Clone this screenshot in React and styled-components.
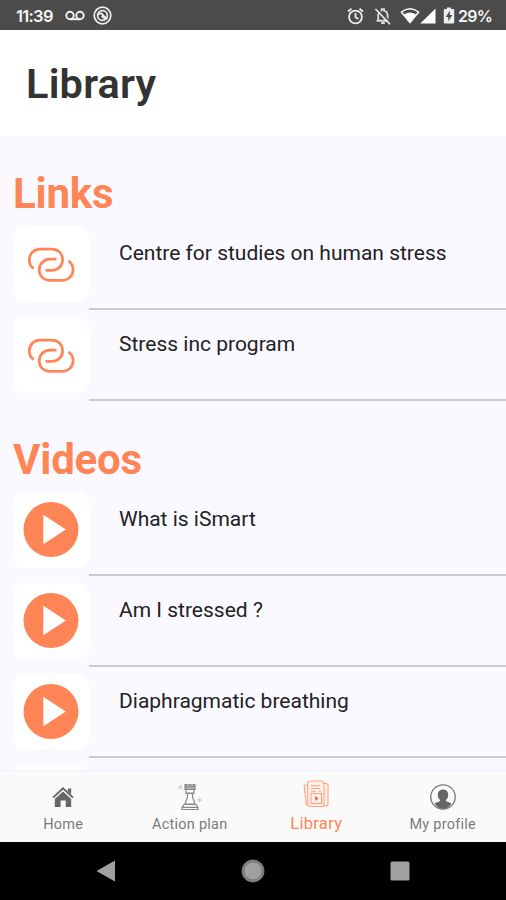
import React from 'react'
import styled, { createGlobalStyle } from 'styled-components'

const GlobalStyle = createGlobalStyle`
* {
  box-sizing: border-box;
}
body {
  margin: 0;
  font-family: Roboto, sans-serif;
  background: #faf9ff;
}
`

const Screen = styled.div`
display: flex;
flex-direction: column;
width: 506px;
height: 900px;
overflow: hidden;
`
const StatusBar = styled.div`
display: flex;
flex: none;
align-items: center;
justify-content: space-between;
height: 30px;
padding: 1px 14px 0 16px;
background: #4b4b4b;
color: #f4f4f4;
`
const StatusGroup = styled.div`
display: flex;
align-items: center;
`
const StatusText = styled.span`
width: ${props => props.$width}px;
margin-left: ${props => props.$gap || 0}px;
font-family: Inter, sans-serif;
font-size: ${props => props.$size}px;
line-height: 20px;
font-weight: 600;
letter-spacing: ${props => props.$spacing}px;
white-space: nowrap;
`
const StatusIcon = styled.svg`
display: block;
flex: none;
margin-left: ${props => props.$gap}px;
`
const Header = styled.header`
display: flex;
flex: none;
align-items: center;
height: 106px;
padding: 2px 26px 0;
background: #fff;
`
const PageTitle = styled.h1`
margin: 0;
font-size: 41.5px;
line-height: 48px;
font-weight: 600;
letter-spacing: 0.2px;
color: #333;
`
const Content = styled.main`
flex: 1;
min-height: 0;
overflow: hidden;
padding-top: 33px;
`
const Section = styled.section`
padding-left: 13px;
margin-bottom: 34px;
`
const SectionTitle = styled.h2`
margin: 0;
height: 50px;
font-size: 42px;
line-height: 50px;
font-weight: 700;
letter-spacing: -0.2px;
color: #ff8557;
`
const Row = styled.div`
display: flex;
height: 91px;
padding-top: 7px;
`
const Tile = styled.div`
display: flex;
flex: none;
align-items: center;
justify-content: center;
width: 76px;
height: 76px;
border-radius: 11px;
background: #fff;
`
const RowBody = styled.div`
flex: 1;
padding: 14px 0 0 30px;
border-bottom: 2px solid #cbcacf;
`
const RowTitle = styled.p`
margin: 0;
font-size: 21px;
line-height: 26px;
color: #222;
white-space: nowrap;
`
const TabBar = styled.nav`
display: grid;
flex: none;
grid-template-columns: repeat(4, 1fr);
height: 72px;
border-top: 1px solid #f0eff8;
background: #fafafa;
`
const Tab = styled.div`
display: flex;
flex-direction: column;
align-items: center;
padding-top: ${props => props.$active ? '9px' : '12px'};
color: ${props => props.$active ? '#ff8557' : '#7a7a7a'};
`
const TabIcon = styled.span`
display: flex;
align-items: center;
justify-content: center;
height: 28px;
`
const TabLabel = styled.span`
margin-top: ${props => props.$active ? '6px' : '4px'};
font-size: ${props => props.$active ? '16.5px' : '14.5px'};
line-height: 20px;
letter-spacing: ${props => props.$active ? '0.3px' : '0.25px'};
white-space: nowrap;
`
const SystemBar = styled.div`
display: flex;
flex: none;
align-items: center;
justify-content: space-between;
height: 58px;
padding: 0 96px;
background: #000;
`

const LinkIcon = () => (
  <svg width="48" height="38" viewBox="0 -1.5 48 38" fill="none" stroke="#ff8557" strokeWidth="2.7">
    <path d="M6.7 22C3.5 20 2.3 16.8 2.3 13.6C2.3 7.2 6.8 2.6 13 2.6H25C31.2 2.6 35.6 7.2 35.6 13.2C35.6 19.4 31 23.8 25 23.8H18.5" />
    <path d="M29.5 12.7H23C16.8 12.7 12.2 17.2 12.2 23.4C12.2 29.4 16.7 33.9 22.9 33.9H35C41.3 33.9 46.1 29.4 46.1 23.2C46.1 19.3 44.4 16.4 41.4 14.4" />
  </svg>
)

const PlayIcon = () => (
  <svg width="56" height="56" viewBox="0 0 56 56">
    <circle cx="28" cy="27.5" r="27.5" fill="#ff8557" />
    <path d="M20.3 12.7L42.8 27.5L20.3 42.3Z" fill="#fff" />
  </svg>
)

const HomeIcon = () => (
  <svg width="22" height="24" viewBox="0 1 22 24" fill="#666">
    <path d="M15.8 4.5h3.4v6l-3.4-3.2z" />
    <path d="M1 13.6L11 4.3l10 9.3" fill="none" stroke="#666" strokeWidth="1.9" />
    <path d="M11 7.4l8.2 7.5V23h-5.4v-6.5H8.6V23H2.8v-8.1z" />
  </svg>
)

const ChessIcon = () => (
  <svg width="26" height="28" viewBox="0 0 26 28" fill="none" stroke="#888" strokeWidth="1.2">
    <path d="M8 1.5h2v1.8h2V1.5h2v1.8h2V1.5h2v5H8z" fill="#aaa" />
    <path d="M9 7v3h8V7M8.5 10.5h9M10.5 11v3L8 21h10l-2.5-7v-3" />
    <path d="M7 21.5h12l2 3v2H5v-2zM5.5 24.3h15" />
    <path d="M2 3l4 4M1 4.8h3M4.2 1.5v3M22.8 14.5v5M20.3 17h5" stroke="#bbb" strokeWidth="0.9" />
  </svg>
)

const LibraryIcon = () => (
  <svg width="26" height="28" viewBox="0 0 26 28" fill="#fff1eb" stroke="#ffa27f" strokeWidth="1.1">
    <path d="M5 5H2Q1 5 1.1 6.2L3.3 24q.2 1.5 1.7 1.5H8z" />
    <path d="M20.5 3.5H23q2 0 2 2V24q0 2-2 2h-3z" />
    <path d="M7 1h11q3 0 3 3v20q0 2.5-2.5 2.5H7q-2.3 0-2.3-2.5V3.4Q4.7 1 7 1z" />
    <path d="M8 5.8h9M8 8.5h9M8 11.2h5M16 11.2h2" />
    <rect x="8" y="13.5" width="10.5" height="10" />
    <path d="M12.7 17l2 1.5-2 1.5z" fill="#ff6430" stroke="#ff6430" />
  </svg>
)

const ProfileIcon = () => (
  <svg width="26" height="26" viewBox="0 0 26 26" fill="#666">
    <circle cx="13" cy="13" r="12.2" fill="none" stroke="#777" strokeWidth="1.3" />
    <path d="M13 5.4c3.4 0 5.2 2.3 5.2 5.3 0 2.6-.9 4.2-2.2 5.1v1.1l5.6 2.7C19.5 23 16.7 25 13 25s-6.5-2-8.6-5.4l5.6-2.7v-1.1c-1.3-.9-2.2-2.5-2.2-5.1 0-3 1.8-5.3 5.2-5.3z" />
  </svg>
)

const sections = [
  {
    title: 'Links',
    icon: LinkIcon,
    items: ['Centre for studies on human stress', 'Stress inc program'],
  },
  {
    title: 'Videos',
    icon: PlayIcon,
    items: ['What is iSmart', 'Am I stressed ?', 'Diaphragmatic breathing', ''],
  },
]

const tabs = [
  { label: 'Home', icon: HomeIcon },
  { label: 'Action plan', icon: ChessIcon },
  { label: 'Library', icon: LibraryIcon, active: true },
  { label: 'My profile', icon: ProfileIcon },
]

const Status = () => (
  <StatusBar>
    <StatusGroup>
      <StatusText $width={38} $size={16.5} $spacing={-0.7}>11:39</StatusText>
      <StatusIcon $gap={11} width="20" height="12" viewBox="0 0 20 12" fill="none" stroke="#eee" strokeWidth="2">
        <circle cx="5" cy="5.5" r="3.7" />
        <circle cx="15" cy="5.5" r="3.7" />
        <path d="M5 9.2h10" />
      </StatusIcon>
      <StatusIcon $gap={8} width="19" height="19" viewBox="0 0 19 19" fill="none" stroke="#eee" strokeWidth="1.7">
        <circle cx="9.5" cy="9.5" r="8.3" />
        <circle cx="9.5" cy="9.5" r="4.9" />
        <path d="M5 8.6c2.7-2.2 4.4-.8 5.2.8l4 3.8M8.5 9.8l3.5 3" />
      </StatusIcon>
    </StatusGroup>
    <StatusGroup>
      <StatusIcon $gap={0} width="17" height="18" viewBox="0 0 17 18" fill="none" stroke="#eee" strokeWidth="1.8">
        <circle cx="8.5" cy="10" r="6.4" />
        <path d="M1 4.5L4.5 1.6M16 4.5l-3.5-2.9M8.5 6v4.3l3 1.8" />
      </StatusIcon>
      <StatusIcon $gap={10} width="18" height="18" viewBox="0 0 18 18">
        <path d="M4.2 13.5V8.4c0-2.6 1.4-4.2 3.5-4.8V2.2h2.4v1.4c2.1.6 3.5 2.2 3.5 4.8v5.1" fill="none" stroke="#ddd" strokeWidth="1.8" />
        <path d="M2.6 13.8h12.6M7.2 16h3.6" stroke="#ddd" strokeWidth="1.9" />
        <path d="M3 1.2L17 16" stroke="#4b4b4b" strokeWidth="1.6" />
        <path d="M1.5 2L16 17.2" stroke="#eee" strokeWidth="1.6" />
      </StatusIcon>
      <StatusIcon $gap={8} width="20" height="17" viewBox="0 0 20 17">
        <path d="M1.4 5Q10-1.7 18.6 5L10 15.5z" fill="none" stroke="#fff" strokeWidth="1.5" />
        <path d="M4.2 7.2Q10 3.8 15.8 7.2L10 15z" fill="#fff" />
      </StatusIcon>
      <StatusIcon $gap={0} width="16" height="16" viewBox="0 0 16 16" fill="#fff">
        <path d="M15.5.5v15H.3z" />
      </StatusIcon>
      <StatusIcon $gap={7} width="12" height="17" viewBox="0 0 12 17">
        <path d="M4 .5h4V2h2.2q1 0 1 1v12.5q0 1-1 1H1.8q-1 0-1-1V3q0-1 1-1H4z" fill="#eee" />
        <path d="M6.8 3.8L2.8 10h2.5v4.2L9.2 8H6.8z" fill="#4b4b4b" />
      </StatusIcon>
      <StatusText $gap={3} $width={34} $size={16} $spacing={-0.7}>29%</StatusText>
    </StatusGroup>
  </StatusBar>
)

const App = () => (
  <>
    <GlobalStyle />
    <Screen>
      <Status />
      <Header>
        <PageTitle>Library</PageTitle>
      </Header>
      <Content>
        {sections.map(({ title, icon: Icon, items }) => (
          <Section key={title}>
            <SectionTitle>{title}</SectionTitle>
            {items.map((item, index) => (
              <Row key={index}>
                <Tile><Icon /></Tile>
                <RowBody>
                  <RowTitle>{item}</RowTitle>
                </RowBody>
              </Row>
            ))}
          </Section>
        ))}
      </Content>
      <TabBar>
        {tabs.map(({ label, icon: Icon, active }) => (
          <Tab key={label} $active={active}>
            <TabIcon><Icon /></TabIcon>
            <TabLabel $active={active}>{label}</TabLabel>
          </Tab>
        ))}
      </TabBar>
      <SystemBar>
        <svg width="20" height="22" viewBox="0 0 20 22" fill="#a0a0a0">
          <path d="M19 .5v21L.5 11z" />
        </svg>
        <svg width="24" height="24" viewBox="0 0 24 24">
          <circle cx="12" cy="12" r="10.8" fill="#a0a0a0" stroke="#777" strokeWidth="1.3" />
          <circle cx="12" cy="12" r="9.2" fill="none" stroke="#555" strokeWidth="0.8" />
        </svg>
        <svg width="20" height="20" viewBox="0 0 20 20">
          <rect x="0.5" y="0.5" width="19" height="19" rx="1.5" fill="#a0a0a0" />
        </svg>
      </SystemBar>
    </Screen>
  </>
)

export default App
